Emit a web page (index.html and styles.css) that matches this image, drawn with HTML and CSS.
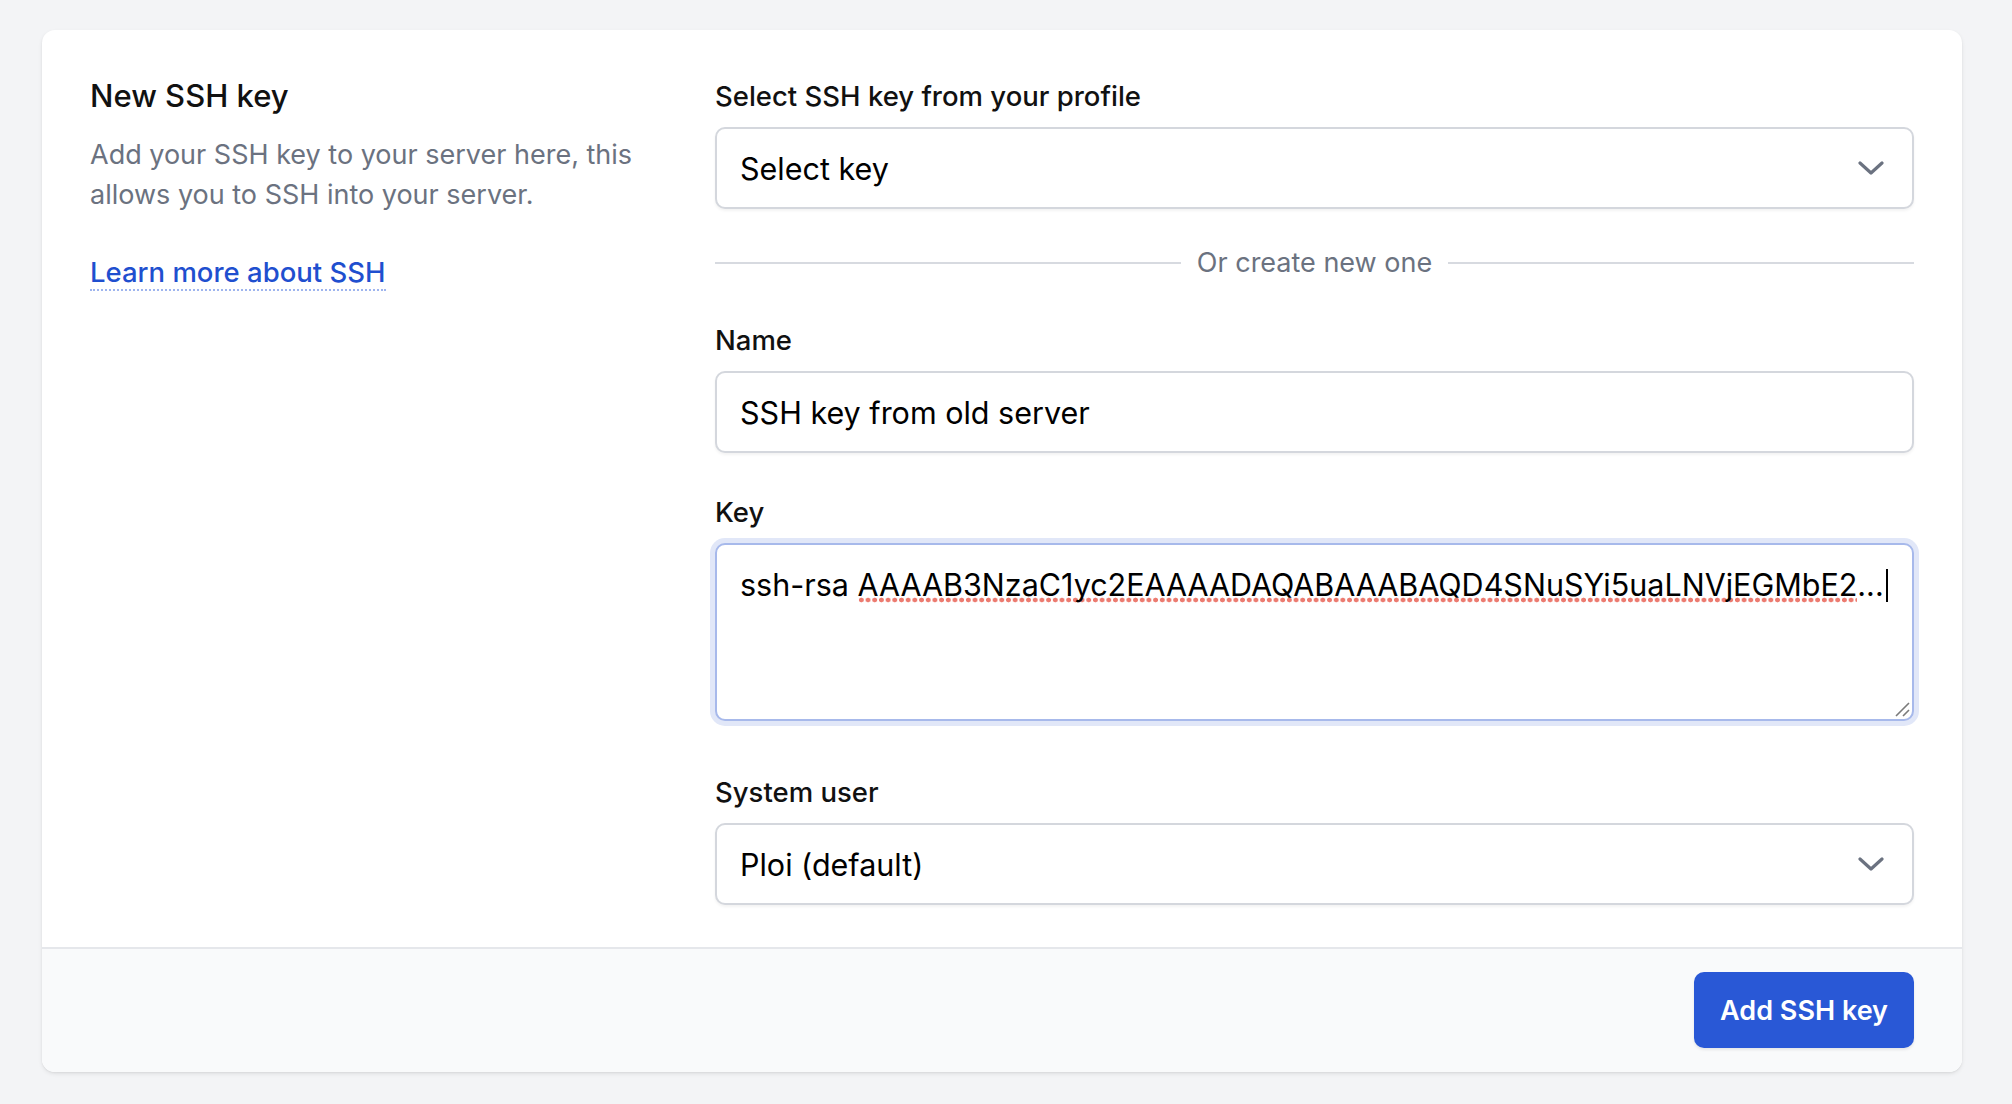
FILE: index.html
```html
<!DOCTYPE html>
<html lang="en">
<head>
<meta charset="utf-8">
<title>New SSH key</title>
<link rel="stylesheet" href="styles.css">
</head>
<body>
<div class="page">
  <div class="card">
    <div class="card-body">
      <div class="intro">
        <h2 class="title">New SSH key</h2>
        <p class="desc">Add your SSH key to your server here, this allows you to SSH into your server.</p>
        <p class="learn-wrap"><a class="learn" href="#">Learn more about SSH</a></p>
      </div>
      <div class="form">
        <label class="label label-first">Select SSH key from your profile</label>
        <div class="field select">
          <span class="value">Select key</span>
          <svg class="chevron" viewBox="0 0 26 14" width="26" height="14"><path d="M2 2 L13 12 L24 2" fill="none" stroke="#6b7280" stroke-width="3.2" stroke-linecap="round" stroke-linejoin="round"/></svg>
        </div>
        <div class="divider"><span class="rule"></span><span class="or">Or create new one</span><span class="rule"></span></div>
        <label class="label">Name</label>
        <div class="field input"><span class="value">SSH key from old server</span></div>
        <label class="label">Key</label>
        <div class="field textarea">
          <div class="ta-text">ssh-rsa <span class="spell">AAAAB3NzaC1yc2EAAAADAQABAAABAQD4SNuSYi5uaLNVjEGMbE2</span>...<span class="caret"></span></div>
          <svg class="grip" viewBox="0 0 16 16" width="16" height="16"><path d="M15 2 L2 15 M15 9 L9 15" stroke="#7b7b7b" stroke-width="1.6" fill="none"/></svg>
        </div>
        <label class="label label-gap">System user</label>
        <div class="field select">
          <span class="value">Ploi (default)</span>
          <svg class="chevron" viewBox="0 0 26 14" width="26" height="14"><path d="M2 2 L13 12 L24 2" fill="none" stroke="#6b7280" stroke-width="3.2" stroke-linecap="round" stroke-linejoin="round"/></svg>
        </div>
      </div>
    </div>
    <div class="card-footer">
      <button class="btn" type="button">Add SSH key</button>
    </div>
  </div>
</div>
</body>
</html>
```
FILE: styles.css
```css
* { box-sizing: border-box; }
html, body { margin: 0; padding: 0; }
body {
  background: #f3f4f6;
  font-family: Inter, "Noto Sans", "Liberation Sans", sans-serif;
  color: #111827;
}
.page {
  padding: 30px 50px 32px 42px;
}
.card {
  background: #ffffff;
  border-radius: 13px;
  box-shadow: 0 2px 4px rgba(0,0,0,0.08), 0 1px 2px rgba(0,0,0,0.05);
  overflow: hidden;
}
.card-body {
  display: grid;
  grid-template-columns: repeat(3, 1fr);
  column-gap: 51px;
  padding: 46px 48px 42px 48px;
  align-items: start;
}
.intro { grid-column: 1 / 2; }
.form {
  grid-column: 2 / 4;
  display: flex;
  flex-direction: column;
}
.title {
  margin: 0;
  font-size: 31px;
  line-height: 40px;
  font-weight: 550;
  color: #111111;
}
.desc {
  margin: 19px 0 0 0;
  font-size: 27px;
  line-height: 40px;
  color: #6b7280;
}
.learn-wrap {
  margin: 37px 0 0 0;
  font-size: 27.5px;
  line-height: 40px;
}
.learn {
  color: #1f4fcf;
  font-weight: 550;
  text-decoration: none;
  border-bottom: 2px dotted #9fb5ee;
}
.label {
  display: block;
  font-size: 27.5px;
  line-height: 36px;
  font-weight: 550;
  color: #111111;
  margin-top: 41px;
  margin-bottom: 13px;
}
.label-first { margin-top: 2px; }
.label-gap { margin-top: 53px; }
.field {
  border: 2px solid #d4d7dd;
  border-radius: 10px;
  background: #ffffff;
  box-shadow: 0 2px 3px rgba(0,0,0,0.05);
  font-size: 30.5px;
  line-height: 40px;
  color: #000000;
}
.select, .input {
  height: 82px;
  display: flex;
  align-items: center;
  justify-content: space-between;
  padding: 0 28px 0 23px;
}
.value { display: block; padding-top: 2px; }
.chevron { display: block; }
.divider {
  display: flex;
  align-items: center;
  margin-top: 36px;
  height: 36px;
}
.rule {
  flex: 1;
  height: 2px;
  background: #d7dae0;
}
.or {
  padding: 0 16px;
  font-size: 27px;
  line-height: 36px;
  color: #6b7280;
}
.textarea {
  position: relative;
  height: 178px;
  padding: 20px 23px;
  border-color: #a7b9eb;
  box-shadow: 0 0 0 5px #e1e7f8;
}
.ta-text {
  white-space: nowrap;
  overflow: hidden;
}
.spell {
  background-image: radial-gradient(circle, #ec7b70 0, #ec7b70 2.1px, rgba(236,123,112,0) 2.7px);
  background-size: 6.7px 6px;
  background-repeat: repeat-x;
  background-position: 0 100%;
}
.caret {
  display: inline-block;
  width: 2px;
  height: 33px;
  background: #000000;
  vertical-align: -6px;
  margin-left: 2px;
}
.grip {
  position: absolute;
  right: 2px;
  bottom: 2px;
}
.card-footer {
  background: #f9fafb;
  border-top: 2px solid #e5e7eb;
  padding: 23px 48px 24px 48px;
  display: flex;
  justify-content: flex-end;
}
.btn {
  height: 76px;
  padding: 0 26px;
  border: none;
  border-radius: 10px;
  background: #2958d6;
  color: #ffffff;
  font-family: Inter, "Noto Sans", "Liberation Sans", sans-serif;
  font-size: 27px;
  font-weight: 600;
  box-shadow: 0 2px 3px rgba(0,0,0,0.08);
}
```
